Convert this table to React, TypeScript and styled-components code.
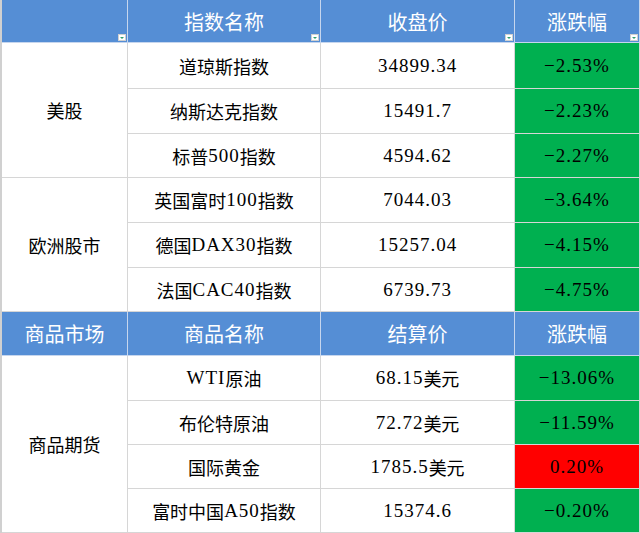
import { Fragment } from 'react';
import { createGlobalStyle, styled } from 'styled-components';

const GlobalStyle = createGlobalStyle`
  html, body {
    margin: 0;
    padding: 0;
    background: #ffffff;
  }
  body {
    font-family: "Liberation Serif", "Noto Sans CJK SC", serif;
  }
`;

const Sheet = styled.div`
  display: grid;
  grid-template-columns: 126px 193px 194px 1fr;
  grid-template-rows: 43px 46px 45px 44px 45px 45px 44px 44px 45px 44px 44px 44px;
  width: 640px;
  height: 533px;
  overflow: hidden;
  border-left: 2px solid #d0d0d0;
  box-sizing: border-box;
`;

type Tone = 'plain' | 'head' | 'down' | 'up';

const colors: Record<Tone, string> = {
  plain: '#ffffff',
  head: '#558ed5',
  down: '#00b050',
  up: '#ff0000',
};

const Cell = styled.div<{ $tone?: Tone; $span?: number; $size?: number }>`
  position: relative;
  display: flex;
  align-items: center;
  justify-content: center;
  grid-row: span ${(p) => p.$span ?? 1};
  background: ${(p) => colors[p.$tone ?? 'plain']};
  color: ${(p) => (p.$tone === 'head' ? '#ffffff' : '#000000')};
  font-size: ${(p) => p.$size ?? 18}px;
  border-right: 1px solid ${(p) => (p.$tone === 'head' ? '#c6d6ee' : '#d6d6d6')};
  border-bottom: 1px solid ${(p) => (p.$tone === 'head' ? '#c6d6ee' : '#d6d6d6')};
  box-sizing: border-box;
  white-space: nowrap;
`;

const Num = styled.span`
  font-family: "Liberation Serif", serif;
  font-size: 19px;
  letter-spacing: 1px;
`;

const Filter = styled.span`
  position: absolute;
  right: 1px;
  bottom: 1px;
  width: 8px;
  height: 7px;
  background: #ffffff;
  border: 1px solid #d0d0d0;
  box-sizing: border-box;
  &::after {
    content: '';
    position: absolute;
    left: 1px;
    top: 2px;
    border-left: 2px solid transparent;
    border-right: 2px solid transparent;
    border-top: 2px solid #2f9e6e;
  }
`;

interface Row {
  name: string;
  price: string;
  change: string;
}

const stocks: { group: string; rows: Row[] }[] = [
  {
    group: '美股',
    rows: [
      { name: '道琼斯指数', price: '34899.34', change: '-2.53%' },
      { name: '纳斯达克指数', price: '15491.7', change: '-2.23%' },
      { name: '标普500指数', price: '4594.62', change: '-2.27%' },
    ],
  },
  {
    group: '欧洲股市',
    rows: [
      { name: '英国富时100指数', price: '7044.03', change: '-3.64%' },
      { name: '德国DAX30指数', price: '15257.04', change: '-4.15%' },
      { name: '法国CAC40指数', price: '6739.73', change: '-4.75%' },
    ],
  },
];

const goods: Row[] = [
  { name: 'WTI原油', price: '68.15美元', change: '-13.06%' },
  { name: '布伦特原油', price: '72.72美元', change: '-11.59%' },
  { name: '国际黄金', price: '1785.5美元', change: '0.20%' },
  { name: '富时中国A50指数', price: '15374.6', change: '-0.20%' },
];

// split digits from CJK so the numbers get the serif face
const Mixed = ({ text }: { text: string }) => {
  const parts = text.split(/([0-9.A-Z%-]+)/).filter(Boolean);
  return (
    <>
      {parts.map((part, i) =>
        /^[0-9.A-Z%-]+$/.test(part) ? <Num key={i}>{part}</Num> : <span key={i}>{part}</span>
      )}
    </>
  );
};

const ChangeCell = ({ change }: { change: string }) => (
  <Cell $tone={change.startsWith('-') ? 'down' : 'up'}>
    <Num>{change.replace('-', '−')}</Num>
  </Cell>
);

const App = () => {
  return (
    <>
      <GlobalStyle />
      <Sheet>
        <Cell $tone="head" $size={20}>
          <Filter />
        </Cell>
        <Cell $tone="head" $size={20}>
          指数名称
          <Filter />
        </Cell>
        <Cell $tone="head" $size={20}>
          收盘价
          <Filter />
        </Cell>
        <Cell $tone="head" $size={20}>
          涨跌幅
          <Filter />
        </Cell>

        {stocks.map((block) =>
          block.rows.map((row, i) => (
            <Fragment key={row.name}>
              {i === 0 && <Cell $span={block.rows.length}>{block.group}</Cell>}
              <Cell>
                <Mixed text={row.name} />
              </Cell>
              <Cell>
                <Num>{row.price}</Num>
              </Cell>
              <ChangeCell change={row.change} />
            </Fragment>
          ))
        )}

        <Cell $tone="head" $size={20}>商品市场</Cell>
        <Cell $tone="head" $size={20}>商品名称</Cell>
        <Cell $tone="head" $size={20}>结算价</Cell>
        <Cell $tone="head" $size={20}>涨跌幅</Cell>

        {goods.map((row, i) => (
          <Fragment key={row.name}>
            {i === 0 && <Cell $span={goods.length}>商品期货</Cell>}
            <Cell>
              <Mixed text={row.name} />
            </Cell>
            <Cell>
              <Mixed text={row.price} />
            </Cell>
            <ChangeCell change={row.change} />
          </Fragment>
        ))}
      </Sheet>
    </>
  );
};

export default App;
